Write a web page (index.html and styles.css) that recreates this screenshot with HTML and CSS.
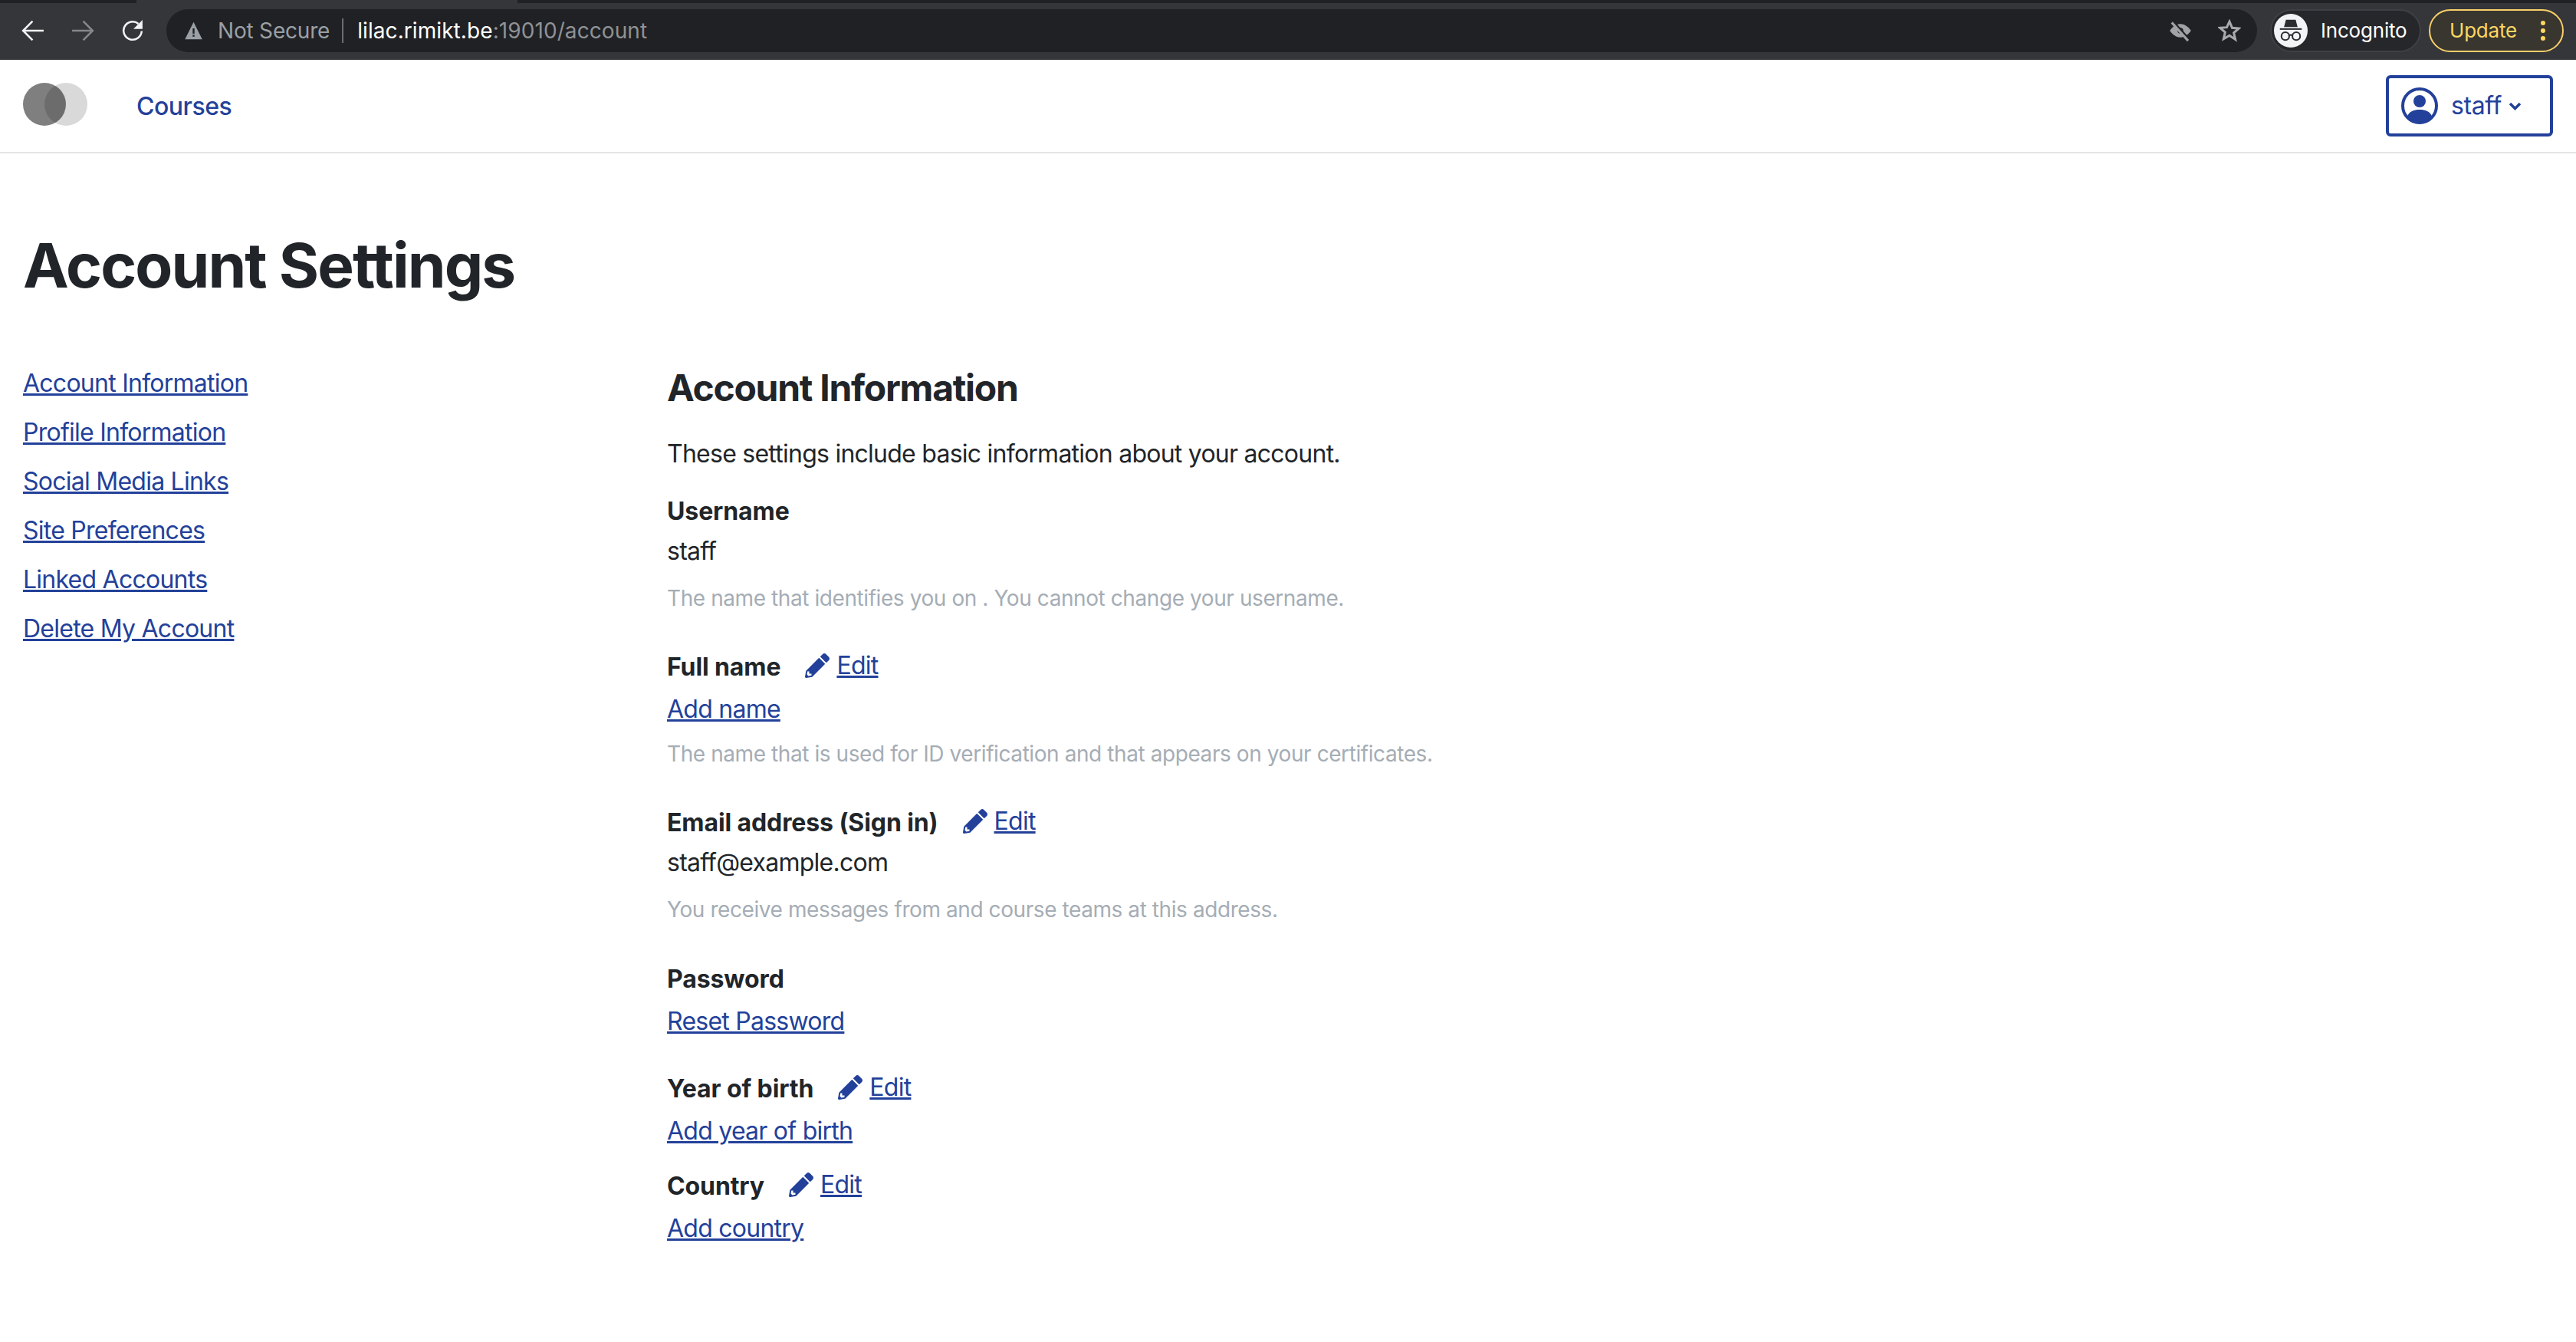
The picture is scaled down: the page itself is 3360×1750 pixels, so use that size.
FILE: index.html
```html
<!DOCTYPE html>
<html lang="en">
<head>
    <meta charset="UTF-8">
    <title>Account Settings</title>
    <link rel="stylesheet" href="styles.css">
</head>
<body>

<!-- browser toolbar -->
<div class="tabstrip"><span class="tab-active"></span></div>
<div class="chrome">
    <div class="chrome-nav">
        <svg class="nav-icon" viewBox="0 0 28 28"><path d="M27 14H3M13.500 2.500L2 14l11.500 11.500"/></svg>
        <svg class="nav-icon nav-off" viewBox="0 0 28 28"><path d="M1 14h24M14.500 2.500L26 14 14.500 25.500"/></svg>
        <svg class="nav-icon" viewBox="0 0 28 28"><path d="M25 14.500A11 11 0 1 1 21 5.500"/><path class="solid" d="M26 1v11H15z"/></svg>
    </div>
    <div class="omnibox">
        <svg class="warn-icon" viewBox="0 0 16 16"><path d="M8 .5L15.500 15.500H.5z"/><rect class="warn-mark" x="7.200" y="6" width="1.600" height="4.600"/><rect class="warn-mark" x="7.200" y="11.600" width="1.600" height="1.600"/></svg>
        <span class="not-secure">Not Secure</span>
        <span class="omni-sep"></span>
        <span class="url"><span class="url-host">lilac.rimikt.be</span>:19010/account</span>
        <svg class="omni-icon eye-icon" viewBox="0 0 24 24"><path d="M12 5c5 0 9 4 11 7-2 3-6 7-11 7S3 15 1 12c2-3 6-7 11-7z"/><circle class="cut" cx="12" cy="12" r="3"/><path class="slash-bg" d="M4 2.500l17 19"/><path class="slash" d="M3 3.500l17 19"/></svg>
        <svg class="omni-icon star-icon" viewBox="0 0 24 24"><path d="M12 2.500l2.800 6.500 7 .6-5.300 4.600 1.600 6.900L12 17l-6.100 3.600 1.600-6.900-5.300-4.600 7-.6z"/></svg>
    </div>
    <div class="incognito">
        <span class="incognito-badge">
            <svg viewBox="0 0 24 24"><path d="M8 3h8l1.600 6H6.400z"/><rect x="3" y="10" width="18" height="1.300"/><circle class="glass" cx="7.500" cy="16.500" r="3.200"/><circle class="glass" cx="16.500" cy="16.500" r="3.200"/><path class="glass" d="M10.700 16c.8-.6 1.800-.6 2.600 0"/></svg>
        </span>
        <span>Incognito</span>
    </div>
    <div class="update">
        <span>Update</span>
        <span class="update-dots"><i></i><i></i><i></i></span>
    </div>
</div>

<!-- site header -->
<header class="site-header">
    <svg class="logo" viewBox="0 0 84 56">
        <circle class="logo-back" cx="56" cy="28" r="28"/>
        <circle class="logo-front" cx="28" cy="28" r="28"/>
    </svg>
    <a class="nav-link" href="#">Courses</a>
    <button class="user-btn">
        <svg class="user-icon" viewBox="0 0 48 48"><circle class="user-ring" cx="24" cy="24" r="22"/><circle cx="24" cy="18" r="8"/><path d="M8 38c2-7 9-9 16-9s14 2 16 9c-4 5-10 8-16 8S12 43 8 38z"/></svg>
        <span>staff</span>
        <svg class="caret" viewBox="0 0 17 11"><path d="M2 2l6.500 6.500L15 2"/></svg>
    </button>
</header>

<main class="page">
    <h1 class="page-title">Account Settings</h1>
    <div class="columns">
        <nav class="side-nav">
            <a href="#">Account Information</a>
            <a href="#">Profile Information</a>
            <a href="#">Social Media Links</a>
            <a href="#">Site Preferences</a>
            <a href="#">Linked Accounts</a>
            <a href="#">Delete My Account</a>
        </nav>
        <section class="settings">
            <h2 class="section-title">Account Information</h2>
            <p class="section-intro">These settings include basic information about your account.</p>

            <div class="field">
                <div class="field-label"><b>Username</b></div>
                <div class="field-value">staff</div>
                <div class="field-help">The name that identifies you on . You cannot change your username.</div>
            </div>

            <div class="field">
                <div class="field-label"><b>Full name</b>
                    <a class="edit" href="#"><svg class="pencil" viewBox="0 0 512 512"><path d="M497.900 142.100l-46.100 46.100c-4.700 4.700-12.300 4.700-17 0l-111-111c-4.700-4.700-4.700-12.300 0-17l46.100-46.100c18.700-18.700 49.100-18.700 67.900 0l60.100 60.100c18.800 18.700 18.800 49.100 0 67.900zM284.200 99.800L21.600 362.400.4 483.900c-2.900 16.400 11.400 30.600 27.800 27.800l121.500-21.300 262.600-262.600c4.700-4.700 4.700-12.300 0-17l-111-111c-4.800-4.700-12.400-4.700-17.100 0zM88 424h48v36.300l-64.500 11.300-31.100-31.100L51.700 376H88v48z"/></svg><span class="edit-text">Edit</span></a>
                </div>
                <div class="field-value field-value-link"><a href="#">Add name</a></div>
                <div class="field-help">The name that is used for ID verification and that appears on your certificates.</div>
            </div>

            <div class="field">
                <div class="field-label"><b>Email address (Sign in)</b>
                    <a class="edit" href="#"><svg class="pencil" viewBox="0 0 512 512"><path d="M497.900 142.100l-46.100 46.100c-4.700 4.700-12.300 4.700-17 0l-111-111c-4.700-4.700-4.700-12.300 0-17l46.100-46.100c18.700-18.700 49.100-18.700 67.900 0l60.100 60.100c18.800 18.700 18.800 49.100 0 67.900zM284.200 99.800L21.600 362.400.4 483.900c-2.900 16.400 11.400 30.600 27.800 27.800l121.500-21.300 262.600-262.600c4.700-4.700 4.700-12.300 0-17l-111-111c-4.800-4.700-12.400-4.700-17.100 0zM88 424h48v36.300l-64.500 11.300-31.100-31.100L51.700 376H88v48z"/></svg><span class="edit-text">Edit</span></a>
                </div>
                <div class="field-value">staff@example.com</div>
                <div class="field-help">You receive messages from and course teams at this address.</div>
            </div>

            <div class="field field-tight field-password">
                <div class="field-label"><b>Password</b></div>
                <div class="field-value field-value-link"><a href="#">Reset Password</a></div>
            </div>

            <div class="field field-tight">
                <div class="field-label"><b>Year of birth</b>
                    <a class="edit" href="#"><svg class="pencil" viewBox="0 0 512 512"><path d="M497.900 142.100l-46.100 46.100c-4.700 4.700-12.300 4.700-17 0l-111-111c-4.700-4.700-4.700-12.300 0-17l46.100-46.100c18.700-18.700 49.100-18.700 67.900 0l60.100 60.100c18.800 18.700 18.800 49.100 0 67.900zM284.200 99.800L21.600 362.400.4 483.900c-2.900 16.400 11.400 30.600 27.800 27.800l121.500-21.300 262.600-262.600c4.700-4.700 4.700-12.300 0-17l-111-111c-4.800-4.700-12.400-4.700-17.100 0zM88 424h48v36.300l-64.500 11.300-31.100-31.100L51.700 376H88v48z"/></svg><span class="edit-text">Edit</span></a>
                </div>
                <div class="field-value field-value-link"><a href="#">Add year of birth</a></div>
            </div>

            <div class="field field-tight">
                <div class="field-label"><b>Country</b>
                    <a class="edit" href="#"><svg class="pencil" viewBox="0 0 512 512"><path d="M497.900 142.100l-46.100 46.100c-4.700 4.700-12.300 4.700-17 0l-111-111c-4.700-4.700-4.700-12.300 0-17l46.100-46.100c18.700-18.700 49.100-18.700 67.900 0l60.100 60.100c18.800 18.700 18.800 49.100 0 67.900zM284.200 99.800L21.600 362.400.4 483.900c-2.900 16.400 11.400 30.600 27.800 27.800l121.500-21.300 262.600-262.600c4.700-4.700 4.700-12.300 0-17l-111-111c-4.800-4.700-12.400-4.700-17.100 0zM88 424h48v36.300l-64.500 11.300-31.100-31.100L51.700 376H88v48z"/></svg><span class="edit-text">Edit</span></a>
                </div>
                <div class="field-value field-value-link"><a href="#">Add country</a></div>
            </div>
        </section>
    </div>
</main>

</body>
</html>
```

FILE: styles.css
```css
* {
    box-sizing: border-box;
}

html, body {
    margin: 0;
    height: 100%;
}

body {
    background: #fff;
    color: #212529;
    font-family: Inter, "Liberation Sans", sans-serif;
    font-size: 32px;
    line-height: 48px;
    letter-spacing: -0.75px;
}

a {
    color: #23419a;
}

/* browser toolbar */
.tabstrip {
    height: 4px;
    padding-left: 178px;
    background: #202124;
}

.tab-active {
    display: block;
    width: 497px;
    height: 4px;
    background: #35363a;
}

.chrome {
    display: flex;
    align-items: center;
    height: 74px;
    padding: 8px 16px 10px 28px;
    background: #35363a;
    font-size: 26px;
    line-height: 32px;
    letter-spacing: -0.2px;
}

.chrome-nav {
    display: flex;
    flex: none;
    gap: 35px;
    width: 189px;
}

.nav-icon {
    flex: none;
    width: 30px;
    height: 30px;
    fill: none;
    stroke: #f1f3f4;
    stroke-width: 2.400;
}

.nav-icon .solid {
    fill: #f1f3f4;
    stroke: none;
}

.nav-off {
    stroke: #85878a;
}

.omnibox {
    display: flex;
    flex: none;
    align-items: center;
    width: 2727px;
    height: 56px;
    padding: 0 21px 0 23px;
    background: #202124;
    border-radius: 28px;
    color: #9aa0a6;
    font-size: 28px;
    letter-spacing: 0;
}

.warn-icon {
    flex: none;
    width: 25px;
    height: 24px;
    margin-right: 19px;
    fill: #9aa0a6;
}

.warn-mark {
    fill: #202124;
}

.not-secure {
    letter-spacing: -0.2px;
}

.omni-sep {
    flex: none;
    width: 2px;
    height: 32px;
    margin: 0 18px 0 16px;
    background: #6a6d70;
}

.url {
    flex: 1;
    color: #8f9296;
    letter-spacing: 0.08px;
}

.url-host {
    color: #fff;
}

.omni-icon {
    flex: none;
    width: 30px;
    height: 30px;
}

.eye-icon {
    margin-right: 34px;
}

.eye-icon path:first-child {
    fill: #a0a3a6;
}

.eye-icon .cut {
    fill: #202124;
}

.eye-icon .slash-bg {
    stroke: #202124;
    stroke-width: 3;
}

.eye-icon .slash {
    stroke: #a0a3a6;
    stroke-width: 2.400;
}

.star-icon {
    fill: none;
    stroke: #a8abae;
    stroke-width: 2.400;
}

.incognito {
    display: flex;
    flex: none;
    align-items: center;
    gap: 17px;
    width: 197px;
    height: 56px;
    margin-left: 17px;
    padding-left: 3px;
    background: #26272b;
    border: 2px solid #3f4045;
    border-radius: 28px;
    color: #fff;
}

.incognito-badge {
    display: flex;
    align-items: center;
    justify-content: center;
    width: 44px;
    height: 44px;
    background: #f1f3f4;
    border-radius: 50%;
}

.incognito-badge svg {
    width: 38px;
    height: 38px;
    fill: #2b2c30;
}

.incognito-badge .glass {
    fill: none;
    stroke: #2b2c30;
    stroke-width: 1.300;
}

.update {
    display: flex;
    flex: none;
    align-items: center;
    justify-content: space-between;
    width: 176px;
    height: 56px;
    margin-left: 10px;
    padding: 0 22px 0 25px;
    background: #38362f;
    border: 2px solid #f9cf69;
    border-radius: 28px;
    color: #fdd663;
}

.update-dots {
    display: flex;
    flex-direction: column;
    gap: 4px;
}

.update-dots i {
    width: 6px;
    height: 6px;
    border-radius: 50%;
    background: #fdd663;
}

/* site header */
.site-header {
    display: flex;
    align-items: center;
    height: 122px;
    padding: 0 30px;
    border-bottom: 2px solid #e5e5e5;
}

.logo {
    flex: none;
    width: 84px;
    height: 56px;
    margin-top: -4px;
}

.logo-back {
    fill: #d9d9d9;
}

.logo-front {
    fill: #000;
    fill-opacity: 0.5;
}

.nav-link {
    margin: 2px 0 0 64px;
    font-weight: 500;
    letter-spacing: -0.5px;
    text-decoration: none;
}

.user-btn {
    display: flex;
    align-items: center;
    width: 218px;
    height: 80px;
    margin-left: auto;
    padding: 0 0 0 16px;
    background: #fff;
    border: 4px solid #23419a;
    border-radius: 6px;
    color: #23419a;
    font: inherit;
    letter-spacing: -0.4px;
}

.user-icon {
    flex: none;
    width: 48px;
    height: 48px;
    margin-right: 17px;
    fill: #23419a;
}

.user-icon .user-ring {
    fill: none;
    stroke: #23419a;
    stroke-width: 4;
}

.caret {
    flex: none;
    width: 17px;
    height: 11px;
    margin-left: 9px;
    fill: none;
    stroke: #23419a;
    stroke-width: 3.500;
}

/* page body */
.page {
    padding: 0 30px;
}

.page-title {
    margin: 98px 0 0;
    font-size: 80px;
    line-height: 96px;
    font-weight: 700;
    letter-spacing: -1.9px;
}

.columns {
    display: flex;
    margin-top: 74px;
}

.side-nav {
    display: flex;
    flex: none;
    flex-direction: column;
    gap: 16px;
    width: 840px;
    padding-top: 8px;
}

.settings {
    padding-top: 8px;
}

.section-title {
    margin: 0;
    font-size: 48px;
    line-height: 60px;
    font-weight: 700;
    letter-spacing: -1.27px;
}

.section-intro {
    margin: 32px 0 0;
}

.field {
    margin-top: 26px;
    padding-bottom: 18px;
}

.field-tight {
    margin-top: 23px;
    padding-bottom: 0;
}

.field-password {
    margin-top: 27px;
    padding-bottom: 16px;
}

.field-label {
    display: flex;
    align-items: center;
    line-height: 50px;
}

.field-label b {
    font-weight: 700;
    letter-spacing: -0.1px;
}

.edit {
    display: flex;
    align-items: center;
    margin: -4px 0 0 32px;
}

.pencil {
    flex: none;
    width: 32px;
    height: 32px;
    margin-right: 9px;
    fill: #23419a;
}

.field-value {
    line-height: 54px;
}

/* link values sit a little lower than plain text ones */
.field-value-link {
    margin-bottom: -3px;
    padding-top: 3px;
}

.field-help {
    margin-top: 13px;
    color: #a5adb5;
    font-size: 28px;
    line-height: 42px;
    letter-spacing: -0.42px;
}
```
